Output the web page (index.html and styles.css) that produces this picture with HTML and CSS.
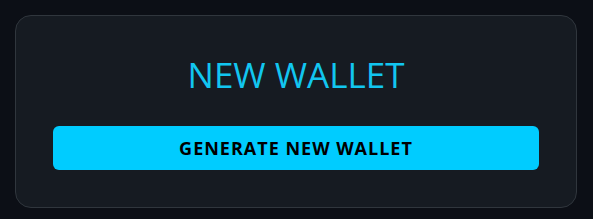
FILE: index.html
```html
<!DOCTYPE html>
<html lang="en">
<head>
    <meta charset="UTF-8">
    <meta name="viewport" content="width=device-width, initial-scale=1.0">
    <title>New Wallet</title>
    <link rel="stylesheet" href="styles.css">
</head>
<body>
    <div class="wallet-card">
        <h2 class="wallet-title">NEW WALLET</h2>
        <button type="button" class="btn-generate">GENERATE NEW WALLET</button>
    </div>
</body>
</html>
```

FILE: styles.css
```css
* {
    margin: 0;
    padding: 0;
    box-sizing: border-box;
    font-family: 'Open Sans', 'Noto Sans', sans-serif;
}

:root {
    --bg-dark: #0c0f16;
    --card-bg: #161b22;
    --border: #30363d;
    --accent: #00ccff;
    --title: #12c6f0;
}

body {
    background-color: var(--bg-dark);
    padding: 15px 16px 11px 15px;
}

.wallet-card {
    background-color: var(--card-bg);
    border: 1px solid var(--border);
    border-radius: 16px;
    padding: 39px 37px 37px;
    display: flex;
    flex-direction: column;
    align-items: center;
}

.wallet-title {
    color: var(--title);
    font-size: 35px;
    font-weight: 400;
    line-height: 40px;
    margin-bottom: 31px;
}

.btn-generate {
    width: 100%;
    height: 44px;
    background-color: var(--accent);
    color: #000;
    border: none;
    border-radius: 6px;
    font-size: 18px;
    font-weight: 700;
    letter-spacing: 1px;
    cursor: pointer;
}
```
